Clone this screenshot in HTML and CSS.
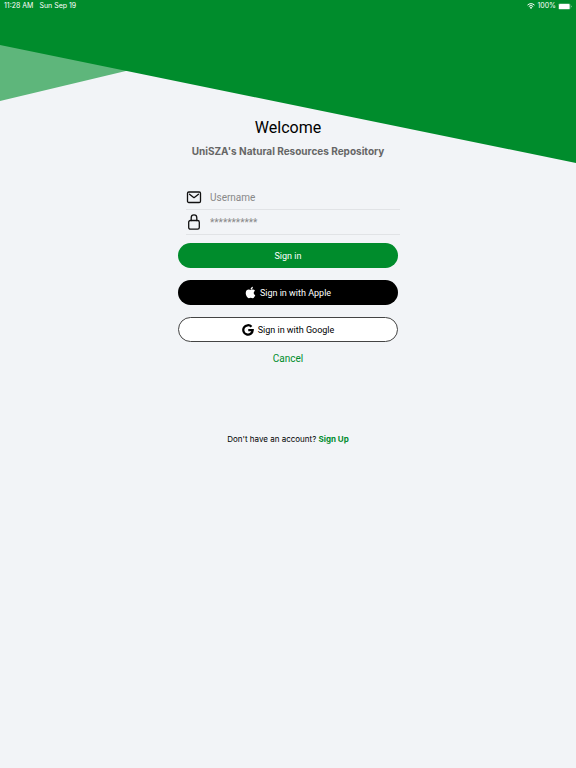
FILE: index.html
```html
<!DOCTYPE html>
<html lang="en">
<head>
    <meta charset="UTF-8">
    <meta name="viewport" content="width=device-width, initial-scale=1.0">
    <title>Welcome</title>
    <link rel="stylesheet" href="styles.css">
</head>
<body>
    <svg class="backdrop" viewBox="0 0 576 163" preserveAspectRatio="none" aria-hidden="true">
        <polygon points="0,40 130,70 0,101" fill="#5eb67b"/>
        <polygon points="0,0 576,0 576,163 0,45" fill="#008c2c"/>
    </svg>
    <header class="status-bar">
        <div class="status-group status-left">
            <span>11:28 AM</span>
            <span>Sun Sep 19</span>
        </div>
        <div class="status-group">
            <svg class="wifi" viewBox="0 0 16 12" aria-hidden="true">
                <path d="M1 4.2a10 10 0 0 1 14 0M3.6 7a6.3 6.3 0 0 1 8.8 0" fill="none" stroke="#fff" stroke-width="2"/>
                <path d="M8 11.8 5.4 9.1a3.8 3.8 0 0 1 5.2 0z" fill="#fff"/>
            </svg>
            <span>100%</span>
            <svg class="battery" viewBox="0 0 30 14" aria-hidden="true">
                <rect x="0.7" y="0.7" width="25.6" height="12.6" rx="3.5" fill="none" stroke="#fff" stroke-opacity="0.5"/>
                <rect x="2" y="1.5" width="23" height="11" rx="2" fill="#fff"/>
                <path d="M28 4.8v4.4c1.2-.4 1.6-1.2 1.6-2.2S29.2 5.2 28 4.8z" fill="#fff" fill-opacity="0.6"/>
            </svg>
        </div>
    </header>
    <main class="login">
        <h1>Welcome</h1>
        <p class="subtitle">UniSZA's Natural Resources Repository</p>
        <form class="login-form">
            <div class="field">
                <label for="username" aria-label="Username">
                    <svg class="field-icon" viewBox="0 0 16 16" aria-hidden="true">
                        <rect x="1.5" y="3" width="13" height="10.5" rx="1.3"/>
                        <path d="M3.5 5.2 8 8.7l4.5-3.5"/>
                    </svg>
                </label>
                <input type="text" id="username" placeholder="Username">
            </div>
            <div class="field">
                <label for="password" aria-label="Password">
                    <svg class="field-icon" viewBox="0 0 16 16" aria-hidden="true">
                        <rect x="2.7" y="6.5" width="10.6" height="8.7" rx="1.7"/>
                        <path d="M5.2 6.5V3.7a2.8 2.8 0 0 1 5.6 0v2.8"/>
                    </svg>
                </label>
                <input type="password" id="password" placeholder="***********">
            </div>
            <div class="buttons">
                <button type="submit" class="btn btn-primary">Sign in</button>
                <button type="button" class="btn btn-apple">
                    <svg class="apple-icon" viewBox="0 0 384 512" aria-hidden="true">
                        <path fill="currentColor" d="M319 269c0-37 16-65 50-85-19-27-47-42-85-45-35-3-74 21-88 21-15 0-50-20-77-20C63 141 4 185 4 273q0 40 14 82c13 36 59 126 108 125 25-1 43-18 75-18 32 0 49 18 77 18 48-1 90-83 102-120-65-30-61-90-61-91zM262 105c27-33 25-62 24-73-24 1-52 16-68 35-17 20-28 44-25 72 26 2 50-11 69-34z"/>
                    </svg>
                    Sign in with Apple
                </button>
                <button type="button" class="btn btn-google">
                    <svg class="google-icon" viewBox="0 0 24 24" aria-hidden="true">
                        <path d="M19 5.6A9.4 9.4 0 1 0 21.4 12.2H12.5" fill="none" stroke="currentColor" stroke-width="4.5"/>
                    </svg>
                    Sign in with Google
                </button>
            </div>
        </form>
        <a href="#" class="cancel">Cancel</a>
        <p class="signup">Don't have an account? <a href="#">Sign Up</a></p>
    </main>
</body>
</html>
```
FILE: styles.css
```css
* {
    box-sizing: border-box;
}
body {
    margin: 0;
    min-height: 100vh;
    background: #f2f4f7;
    color: #000;
    font-family: Roboto, "Liberation Sans", sans-serif;
    position: relative;
}
a {
    color: #008c2c;
    text-decoration: none;
}
/* Green slanted shapes behind the content */
.backdrop {
    position: absolute;
    top: 0;
    left: 0;
    width: 100%;
    height: 163px;
    z-index: -1;
}
.status-bar {
    display: flex;
    justify-content: space-between;
    height: 12px;
    padding: 0 4px;
    color: #fff;
    font-family: Inter, sans-serif;
    font-size: 7px;
    line-height: 12px;
}
.status-group {
    display: flex;
    align-items: center;
    gap: 2px;
}
.status-left {
    gap: 6px;
}
.wifi {
    width: 8px;
    height: 6px;
}
.battery {
    width: 14px;
    height: 7px;
}
.login {
    display: flex;
    flex-direction: column;
    align-items: center;
    padding-top: 106px;
}
h1 {
    margin: 0;
    font-size: 16px;
    font-weight: 400;
    line-height: 20px;
}
.subtitle {
    margin: 7px 0 0;
    color: #666;
    font-family: Inter, sans-serif;
    font-size: 10px;
    font-weight: 700;
    line-height: 12px;
}
.login-form {
    width: 220px;
    margin-top: 28px;
}
.field {
    display: flex;
    align-items: center;
    gap: 8px;
    height: 25px;
    margin: 0 -2px 0 8px;
    border-bottom: 1px solid #e1e3e6;
}
.field label {
    display: flex;
}
.field-icon {
    width: 16px;
    height: 16px;
    fill: none;
    stroke: #111;
    stroke-width: 1.3;
    stroke-linecap: round;
    stroke-linejoin: round;
}
.field input {
    flex: 1;
    min-width: 0;
    padding: 0;
    border: none;
    outline: none;
    background: none;
    color: #222;
    font-family: inherit;
    font-size: 10px;
}
.field input::placeholder {
    color: #888;
}
.buttons {
    display: flex;
    flex-direction: column;
    gap: 12px;
    margin-top: 8px;
}
.btn {
    display: flex;
    align-items: center;
    justify-content: center;
    gap: 4px;
    width: 100%;
    height: 25px;
    padding: 0;
    border: 1px solid transparent;
    border-radius: 13px;
    font-family: inherit;
    font-size: 9px;
    font-weight: 400;
    cursor: pointer;
}
.btn-primary {
    background: #008c2c;
    color: #fff;
}
.btn-apple {
    background: #000;
    color: #fff;
}
.btn-google {
    background: #fff;
    border-color: #444;
    color: #000;
}
.apple-icon {
    width: 11px;
    height: 13px;
}
.google-icon {
    width: 12px;
    height: 12px;
}
.cancel {
    margin-top: 10px;
    font-size: 10px;
    line-height: 14px;
}
.signup {
    margin: 67px 0 0;
    font-family: Inter, sans-serif;
    font-size: 8px;
    line-height: 12px;
}
.signup a {
    font-weight: 700;
}
```
